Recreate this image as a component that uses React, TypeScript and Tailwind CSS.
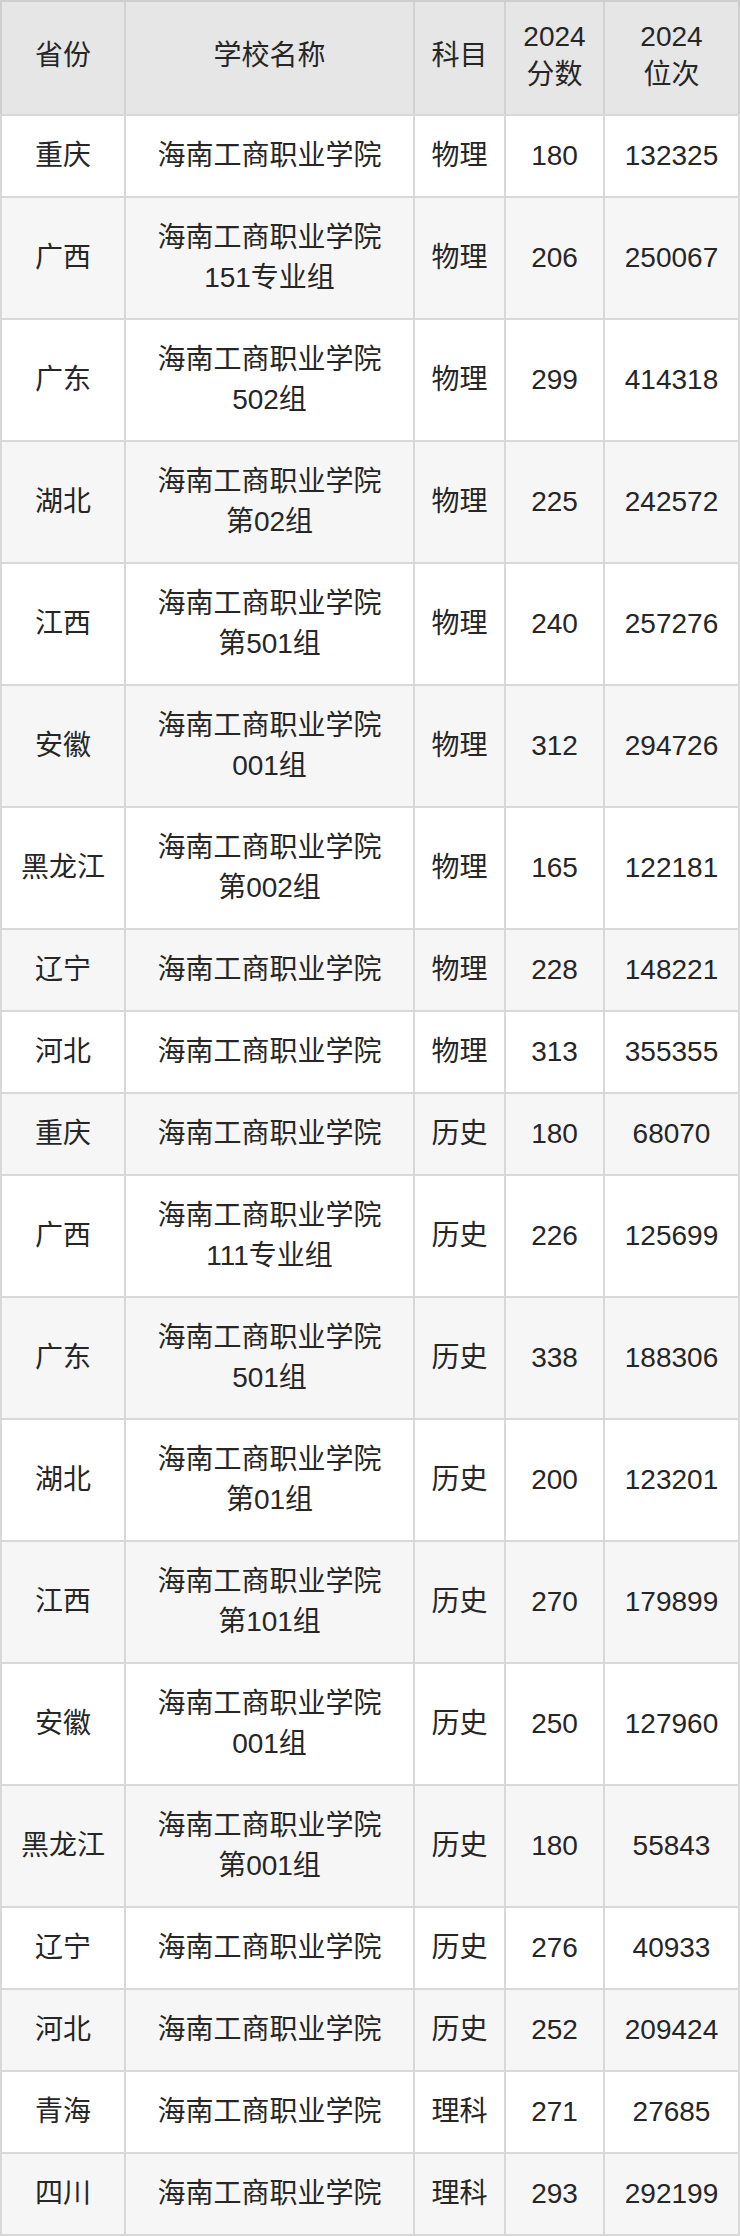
const rows: [string, string, string | null, string, string, string][] = [
  ["重庆", "海南工商职业学院", null, "物理", "180", "132325"],
  ["广西", "海南工商职业学院", "151专业组", "物理", "206", "250067"],
  ["广东", "海南工商职业学院", "502组", "物理", "299", "414318"],
  ["湖北", "海南工商职业学院", "第02组", "物理", "225", "242572"],
  ["江西", "海南工商职业学院", "第501组", "物理", "240", "257276"],
  ["安徽", "海南工商职业学院", "001组", "物理", "312", "294726"],
  ["黑龙江", "海南工商职业学院", "第002组", "物理", "165", "122181"],
  ["辽宁", "海南工商职业学院", null, "物理", "228", "148221"],
  ["河北", "海南工商职业学院", null, "物理", "313", "355355"],
  ["重庆", "海南工商职业学院", null, "历史", "180", "68070"],
  ["广西", "海南工商职业学院", "111专业组", "历史", "226", "125699"],
  ["广东", "海南工商职业学院", "501组", "历史", "338", "188306"],
  ["湖北", "海南工商职业学院", "第01组", "历史", "200", "123201"],
  ["江西", "海南工商职业学院", "第101组", "历史", "270", "179899"],
  ["安徽", "海南工商职业学院", "001组", "历史", "250", "127960"],
  ["黑龙江", "海南工商职业学院", "第001组", "历史", "180", "55843"],
  ["辽宁", "海南工商职业学院", null, "历史", "276", "40933"],
  ["河北", "海南工商职业学院", null, "历史", "252", "209424"],
  ["青海", "海南工商职业学院", null, "理科", "271", "27685"],
  ["四川", "海南工商职业学院", null, "理科", "293", "292199"],
]

const cols = "grid grid-cols-[122px_287px_89px_97px_133px] gap-[2px]"

export default function App() {
  return (
    <div
      className="w-[740px] bg-white text-[28px] leading-[40px] text-[#262626]"
      style={{ fontFamily: '"Liberation Sans", Arial, "Noto Sans CJK SC", sans-serif' }}
    >
      <div className="flex flex-col gap-[2px] bg-[#d8d8d8] p-[2px]">
        {/* header */}
        <div className={`${cols} -mx-[2px] -mt-[2px] border-x-2 border-t-2 border-[#cfcfcf] bg-[#d2d2d2]`}>
          <div className="flex h-[112px] items-center justify-center bg-[#e6e6e6] pb-[4px]">省份</div>
          <div className="flex h-[112px] items-center justify-center bg-[#e6e6e6] pb-[4px]">学校名称</div>
          <div className="flex h-[112px] items-center justify-center bg-[#e6e6e6] pb-[4px]">科目</div>
          <div className="flex h-[112px] flex-col items-center justify-center bg-[#e6e6e6] pb-[4px] leading-[38px]">
            <span>2024</span>
            <span>分数</span>
          </div>
          <div className="flex h-[112px] flex-col items-center justify-center bg-[#e6e6e6] pb-[4px] leading-[38px]">
            <span>2024</span>
            <span>位次</span>
          </div>
        </div>

        {rows.map(([prov, school, group, subject, score, rank], i) => {
          const bg = i % 2 === 0 ? "bg-white" : "bg-[#f6f6f6]"
          const h = group ? "h-[120px]" : "h-[80px]"
          return (
            <div key={i} className={cols}>
              <div className={`flex ${h} items-center justify-center ${bg}`}>{prov}</div>
              <div className={`flex ${h} flex-col items-center justify-center ${bg}`}>
                <span>{school}</span>
                {group && <span>{group}</span>}
              </div>
              <div className={`flex ${h} items-center justify-center ${bg}`}>{subject}</div>
              <div className={`flex ${h} items-center justify-center ${bg}`}>{score}</div>
              <div className={`flex ${h} items-center justify-center ${bg}`}>{rank}</div>
            </div>
          )
        })}
      </div>
    </div>
  )
}
